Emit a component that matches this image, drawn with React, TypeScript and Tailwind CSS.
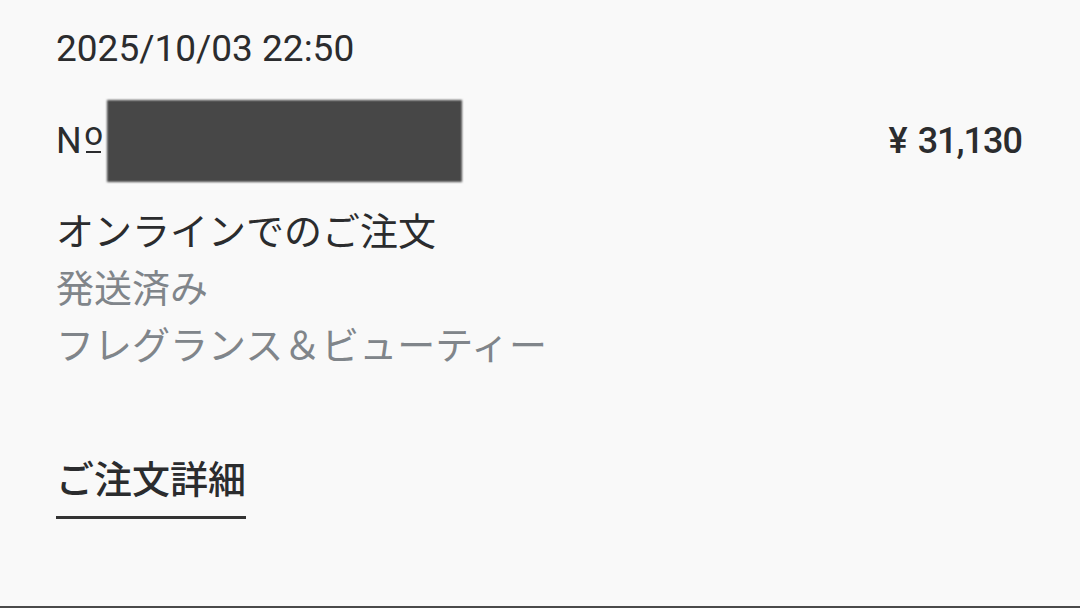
import React from "react";

export default function App() {
  const font = { fontFamily: 'Roboto, "Noto Sans CJK JP", sans-serif' };
  return (
    <div
      className="w-[1080px] h-[608px] bg-[#f9f9f9] border-b-[2px] border-[#4a4a4a] flex flex-col pl-[56px] pr-[58px] pt-[28px] text-[#2b2c2e] overflow-hidden"
      style={font}
    >
      <div className="text-[37px] leading-[42px] h-[42px]">2025/10/03 22:50</div>
      <div className="mt-[30px] h-[82px] flex items-center justify-between">
        <div className="flex items-center h-full">
          <div className="flex items-start h-[42px]">
            <span className="text-[36px] leading-[42px]">N</span>
            <span className="ml-[4px] mt-[3px] flex flex-col items-center w-[16px]">
              <span className="text-[33px] leading-[21px]">o</span>
              <span className="mt-[7px] h-[2px] w-[15px] bg-[#2b2c2e]" />
            </span>
          </div>
          <div className="ml-[5px] w-[355px] h-[82px] bg-[#474747] blur-[1px]" />
        </div>
        <div className="flex items-center text-[36px] leading-[42px] font-medium tracking-[-1px]">
          <span>¥</span>
          <span className="ml-[11px]">31,130</span>
        </div>
      </div>
      <div className="mt-[22px] flex flex-col text-[38px] leading-[57px]">
        <div className="text-[#2b2c2e]">オンラインでのご注文</div>
        <div className="text-[#80858a]">発送済み</div>
        <div className="text-[#80858a]">フレグランス＆ビューティー</div>
      </div>
      <div className="mt-[81px] flex">
        <div className="text-[38px] leading-[48px] font-medium pb-[12px] border-b-[3px] border-[#333]">
          ご注文詳細
        </div>
      </div>
    </div>
  );
}
